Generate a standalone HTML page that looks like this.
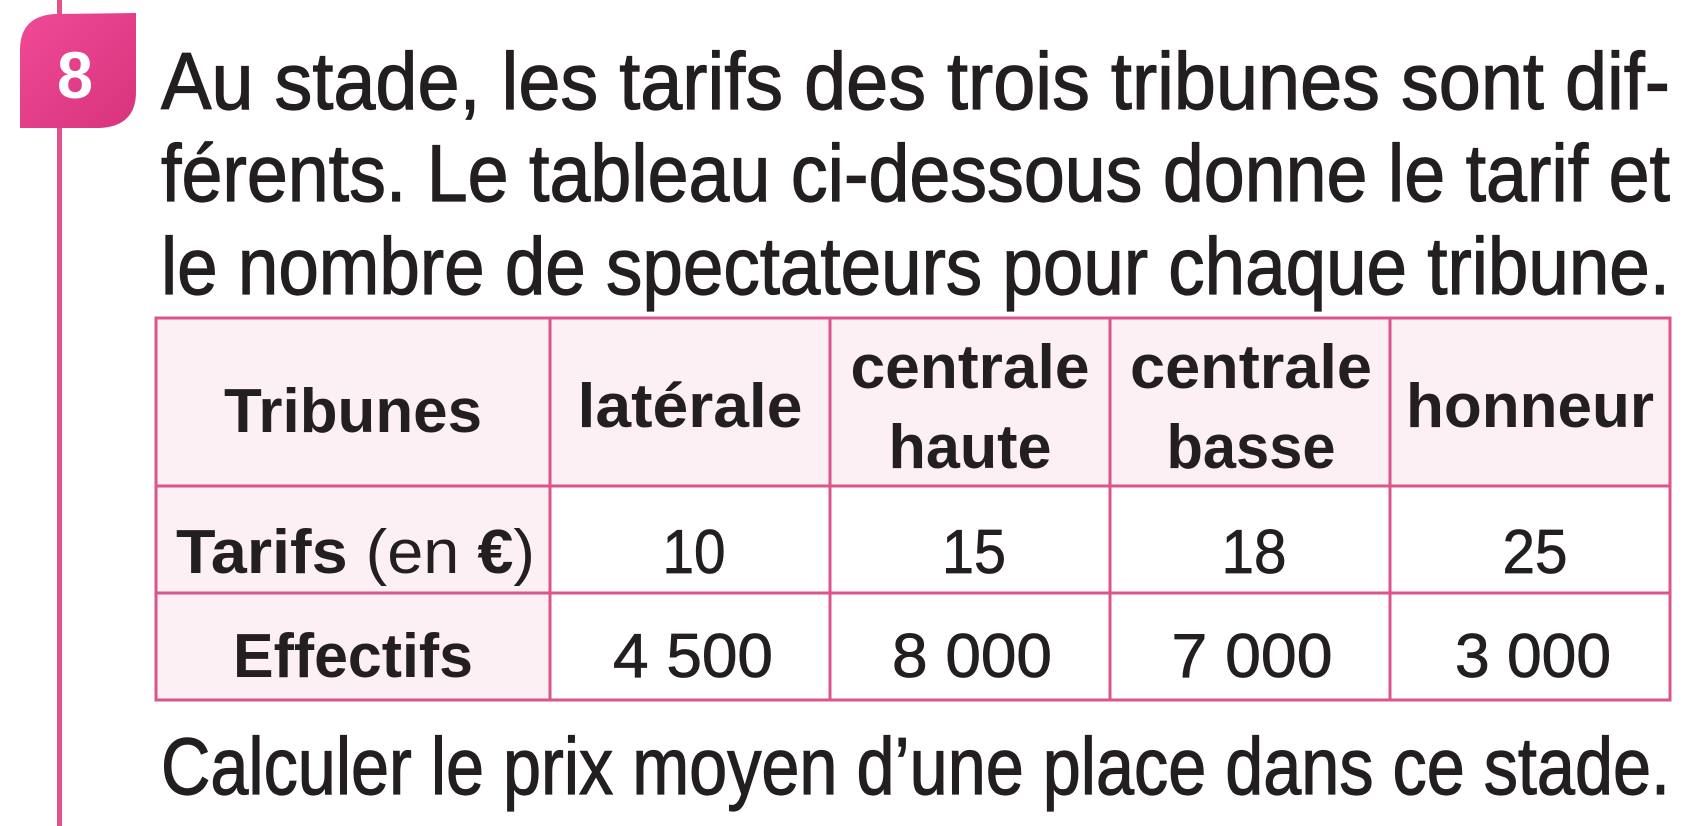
<!DOCTYPE html>
<html><head><meta charset="utf-8"><style>
html,body{margin:0;padding:0;background:#fff;width:1706px;height:826px;overflow:hidden}
svg{display:block}
text{font-family:"Liberation Sans",sans-serif;fill:#231f20}
.b{font-weight:bold}
.m{stroke:#231f20;stroke-width:1.2}
</style></head><body>
<svg width="1706" height="826" viewBox="0 0 1706 826" xmlns="http://www.w3.org/2000/svg">
<defs><linearGradient id="g" x1="0" y1="0" x2="1" y2="1"><stop offset="0" stop-color="#f04a96"/><stop offset="1" stop-color="#d8337d"/></linearGradient></defs>
<rect x="57" y="0" width="5" height="826" fill="#e2508e"/>
<path d="M20 128 L20 50 Q20 16 55 14 L136 13 L136 92 Q136 126 100 128 Z" fill="url(#g)"/>
<text x="75" y="98" class="b" font-size="66" text-anchor="middle" textLength="36" lengthAdjust="spacingAndGlyphs" style="fill:#fff">8</text>

<g font-size="81" class="m">
<text x="161" y="109" textLength="1509" lengthAdjust="spacingAndGlyphs">Au stade, les tarifs des trois tribunes sont dif-</text>
<text x="161" y="201" textLength="1509" lengthAdjust="spacingAndGlyphs">férents. Le tableau ci-dessous donne le tarif et</text>
<text x="161" y="294" textLength="1509" lengthAdjust="spacingAndGlyphs">le nombre de spectateurs pour chaque tribune.</text>
<text x="161" y="794" textLength="1509" lengthAdjust="spacingAndGlyphs">Calculer le prix moyen d’une place dans ce stade.</text>
</g>

<rect x="156" y="318" width="1514" height="168" fill="#fcf0f4"/>
<rect x="156" y="486" width="394" height="214" fill="#fcf0f4"/>
<g stroke="#d9558c" stroke-width="3" fill="none">
<rect x="156" y="318" width="1514" height="382"/>
<line x1="156" y1="486" x2="1670" y2="486"/>
<line x1="156" y1="593" x2="1670" y2="593"/>
<line x1="550" y1="318" x2="550" y2="700"/>
<line x1="830" y1="318" x2="830" y2="700"/>
<line x1="1110" y1="318" x2="1110" y2="700"/>
<line x1="1390" y1="318" x2="1390" y2="700"/>
</g>

<g font-size="62" text-anchor="middle" class="b">
<text x="353" y="432" textLength="258" lengthAdjust="spacingAndGlyphs">Tribunes</text>
<text x="690" y="427" textLength="225" lengthAdjust="spacingAndGlyphs">latérale</text>
<text x="970" y="388" textLength="239" lengthAdjust="spacingAndGlyphs">centrale</text>
<text x="970" y="468" textLength="163" lengthAdjust="spacingAndGlyphs">haute</text>
<text x="1251" y="388" textLength="242" lengthAdjust="spacingAndGlyphs">centrale</text>
<text x="1251" y="468" textLength="169" lengthAdjust="spacingAndGlyphs">basse</text>
<text x="1530" y="427" textLength="248" lengthAdjust="spacingAndGlyphs">honneur</text>
<text x="353" y="677" textLength="240" lengthAdjust="spacingAndGlyphs">Effectifs</text>
</g>
<text x="176" y="573" font-size="62" textLength="359" lengthAdjust="spacingAndGlyphs"><tspan class="b">Tarifs</tspan> (en <tspan class="b">€</tspan>)</text>

<g font-size="62" text-anchor="middle" class="m" style="stroke-width:0.8">
<text x="694" y="573" textLength="63" lengthAdjust="spacingAndGlyphs">10</text>
<text x="974" y="573" textLength="64" lengthAdjust="spacingAndGlyphs">15</text>
<text x="1254" y="573" textLength="65" lengthAdjust="spacingAndGlyphs">18</text>
<text x="1535" y="573" textLength="65" lengthAdjust="spacingAndGlyphs">25</text>
<text x="693" y="677" textLength="160" lengthAdjust="spacingAndGlyphs">4 500</text>
<text x="972" y="677" textLength="160" lengthAdjust="spacingAndGlyphs">8 000</text>
<text x="1252" y="677" textLength="161" lengthAdjust="spacingAndGlyphs">7 000</text>
<text x="1533" y="677" textLength="156" lengthAdjust="spacingAndGlyphs">3 000</text>
</g>
</svg>
</body></html>
